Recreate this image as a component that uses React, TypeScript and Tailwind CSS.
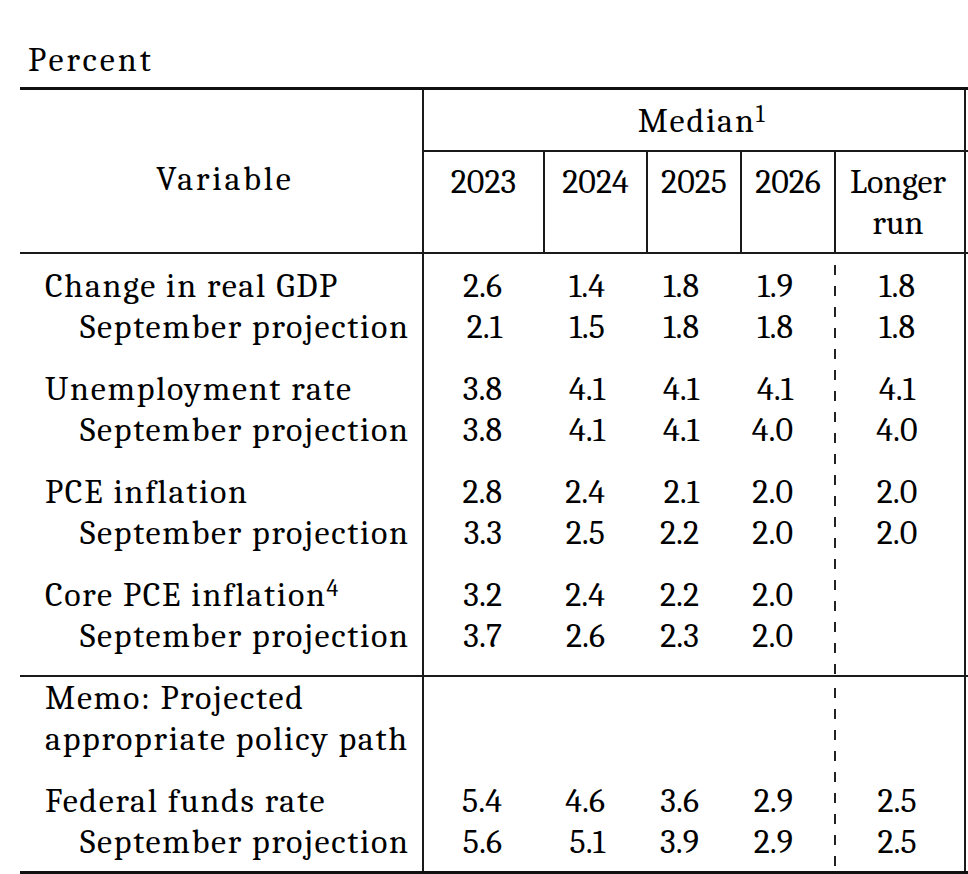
type Line = { label: string; indent?: boolean; sup?: string; vals: string[] };
type Group = Line[];

const SERIF = "font-serif font-['Liberation_Serif',serif]";
const COLS = 'grid grid-cols-[402px_121px_103px_94px_94px_130px_200px]';
const DASH =
  'bg-[repeating-linear-gradient(to_bottom,transparent_0_11px,#222_11px_21px)] bg-[length:2px_100%] bg-no-repeat';

const main: Group[] = [
  [
    { label: 'Change in real GDP', vals: ['2.6', '1.4', '1.8', '1.9', '1.8'] },
    { label: 'September projection', indent: true, vals: ['2.1', '1.5', '1.8', '1.8', '1.8'] },
  ],
  [
    { label: 'Unemployment rate', vals: ['3.8', '4.1', '4.1', '4.1', '4.1'] },
    { label: 'September projection', indent: true, vals: ['3.8', '4.1', '4.1', '4.0', '4.0'] },
  ],
  [
    { label: 'PCE inflation', vals: ['2.8', '2.4', '2.1', '2.0', '2.0'] },
    { label: 'September projection', indent: true, vals: ['3.3', '2.5', '2.2', '2.0', '2.0'] },
  ],
  [
    { label: 'Core PCE inflation', sup: '4', vals: ['3.2', '2.4', '2.2', '2.0', ''] },
    { label: 'September projection', indent: true, vals: ['3.7', '2.6', '2.3', '2.0', ''] },
  ],
];

const memo: Group[] = [
  [
    { label: 'Memo: Projected', vals: ['', '', '', '', ''] },
    { label: 'appropriate policy path', vals: ['', '', '', '', ''] },
  ],
  [
    { label: 'Federal funds rate', vals: ['5.4', '4.6', '3.6', '2.9', '2.5'] },
    { label: 'September projection', indent: true, vals: ['5.6', '5.1', '3.9', '2.9', '2.5'] },
  ],
];

function Section({ groups, pad, className = '' }: { groups: Group[]; pad: string; className?: string }) {
  const numCol = (i: number, extra: string, align: string) => (
    <div className={`flex flex-col gap-[21px] ${pad} ${extra}`}>
      {groups.map((g, gi) => (
        <div key={gi} className="flex flex-col">
          {g.map((line, li) => (
            <div key={li} className={`h-[41px] ${align}`}>
              {line.vals[i] || '\u00a0'}
            </div>
          ))}
        </div>
      ))}
    </div>
  );

  return (
    <div className={`${COLS} ${SERIF} ${className}`}>
      <div className={`flex flex-col gap-[21px] ${pad}`}>
        {groups.map((g, gi) => (
          <div key={gi} className="flex flex-col">
            {g.map((line, li) => (
              <div
                key={li}
                className={`h-[41px] whitespace-nowrap tracking-[1.7px] ${line.indent ? 'pl-[60px]' : 'pl-[25px]'}`}
              >
                {line.label}
                {line.sup && <sup className="-top-[10px] text-[24px] tracking-normal">{line.sup}</sup>}
              </div>
            ))}
          </div>
        ))}
      </div>
      {numCol(0, 'border-l-2 border-[#1a1a1a]', 'pr-[41px] text-right')}
      {numCol(1, '', 'pr-[41px] text-right')}
      {numCol(2, '', 'pr-[41px] text-right')}
      {numCol(3, '', 'pr-[41px] text-right')}
      {numCol(4, DASH, 'pr-[4px] text-center')}
      <div className="border-l-2 border-[#1a1a1a]" />
    </div>
  );
}

export default function App() {
  return (
    <div className={`h-[874px] w-[968px] overflow-hidden bg-white text-[34px] leading-[41px] text-black ${SERIF}`}>
      <div className={`h-[87px] pl-[28px] pt-[40px] tracking-[3px] ${SERIF}`}>Percent</div>

      <div className="ml-[20px] w-[1100px] border-t-[3px] border-b-[3px] border-[#111]">
        {/* header */}
        <div className={`${COLS} grid-rows-[62px_102px] ${SERIF}`}>
          <div className="row-span-2 border-b-2 border-[#1a1a1a] pl-[8px] pt-[69px] text-center tracking-[2.8px]">
            Variable
          </div>
          <div className="col-span-5 border-b-2 border-l-2 border-[#1a1a1a] pl-[14px] pt-[11px] text-center tracking-[1.8px]">
            Median<sup className="-top-[10px] text-[24px] tracking-normal">1</sup>
          </div>
          <div className="border-b-2 border-l-2 border-[#1a1a1a]" />
          {['2023', '2024', '2025', '2026'].map((y) => (
            <div key={y} className="border-b-2 border-l-2 border-[#1a1a1a] pt-[10px] text-center">
              {y}
            </div>
          ))}
          <div className="flex flex-col border-b-2 border-l-2 border-[#1a1a1a] pt-[10px] pr-[4px] text-center">
            <span>Longer</span>
            <span>run</span>
          </div>
          <div className="border-b-2 border-l-2 border-[#1a1a1a]" />
        </div>

        {/* body */}
        <Section groups={main} pad="pt-[12px] pb-[18px]" className="border-b-2 border-[#1a1a1a]" />
        <Section groups={memo} pad="pt-[1px] pb-[8px]" />
      </div>
    </div>
  );
}
